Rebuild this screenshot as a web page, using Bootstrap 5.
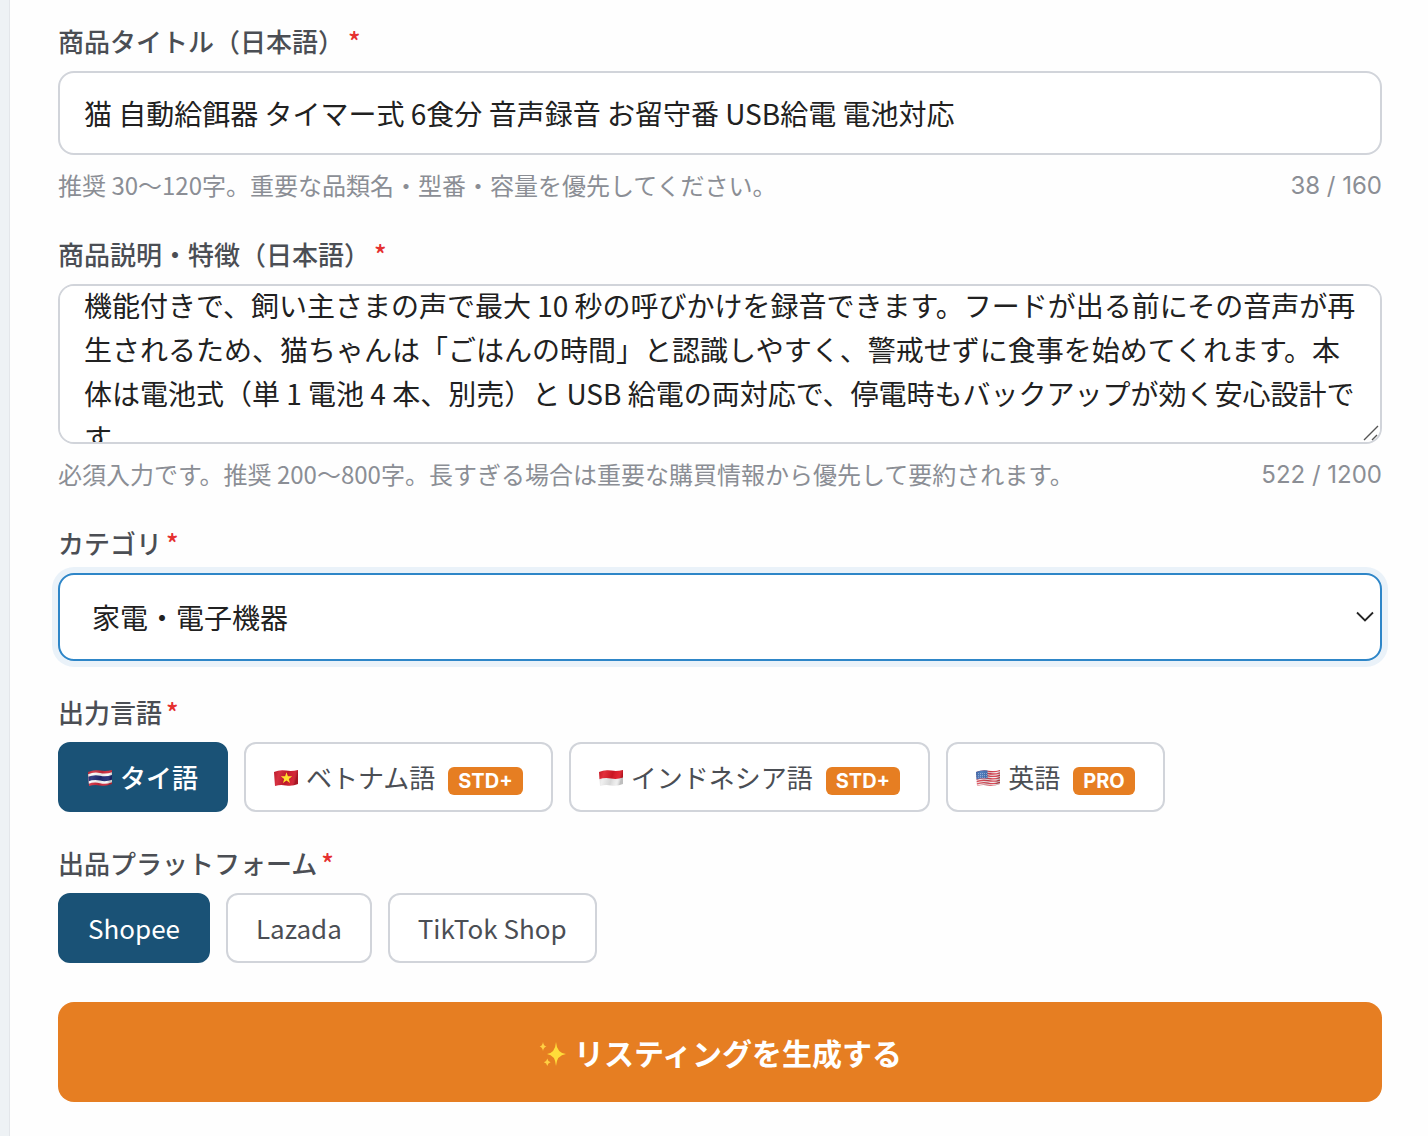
<!DOCTYPE html>
<html lang="ja">
<head>
<meta charset="utf-8">
<meta name="viewport" content="width=device-width, initial-scale=1">
<title>リスティング生成</title>
<link href="https://cdn.jsdelivr.net/npm/bootstrap@5.3.0/dist/css/bootstrap.min.css" rel="stylesheet">
<style>
  :root {
    --ink: #212121;
    --label: #4b4e54;
    --muted: #8b8e95;
    --line: #d1d4da;
    --navy: #1a5276;
    --orange: #e67e22;
    --blue: #2e86c8;
  }
  body {
    font-family: "Noto Sans CJK JP", sans-serif;
    color: var(--ink);
    background: #eef2f5;
  }
  .panel {
    min-height: 100vh;
    margin-left: 9px;
    padding: 22px 46px 34px 48px;
    background: #fefefe;
    border-left: 1px solid #e3e6ea;
  }
  .field { margin-bottom: 32px; }
  .field-label {
    display: block;
    margin-bottom: 12px;
    font-size: 26px;
    line-height: 37px;
    font-weight: 500;
    color: var(--label);
  }
  .req { margin-left: 4px; color: #e53030; }
  .form-control, .form-select {
    font-size: 28px;
    color: var(--ink);
    background-color: #fff;
    border: 2px solid var(--line);
    border-radius: 16px;
  }
  .form-control { padding: 20px 24px; line-height: 40px; }
  textarea.form-control {
    height: 160px;
    line-height: 44px;
    resize: vertical;
  }
  textarea.form-control::-webkit-scrollbar { width: 0; height: 0; }
  textarea.form-control::-webkit-resizer { background: transparent; }
  .area-wrap { position: relative; }
  .grip {
    position: absolute;
    right: 2px;
    bottom: 2px;
    pointer-events: none;
  }
  .form-select {
    height: 88px;
    padding: 20px 32px;
    line-height: 44px;
    background-image: url("data:image/svg+xml,%3Csvg xmlns='http://www.w3.org/2000/svg' viewBox='0 0 18 12'%3E%3Cpath d='M1 1.5l8 8 8-8' fill='none' stroke='%23262626' stroke-width='1.8'/%3E%3C/svg%3E");
    background-size: 18px 12px;
    background-position: right 6px center;
  }
  .form-select.is-active, .form-select:focus {
    border-color: var(--blue);
    box-shadow: 0 0 0 6px #eaf2f9;
  }
  .hint {
    margin-top: 12px;
    font-size: 24px;
    line-height: 36px;
    color: var(--muted);
  }
  .counter { font-family: Inter, sans-serif; line-height: 38px; height: 36px; }
  .chip {
    padding: 11px 28px;
    font-size: 26px;
    line-height: 44px;
    font-weight: 400;
    color: var(--label);
    background: #fff;
    border: 2px solid var(--line);
    border-radius: 12px;
  }
  .chip.active, .chip.active:hover {
    color: #fff;
    background: var(--navy);
    border-color: var(--navy);
  }
  .chip.lang { font-weight: 500; }
  .flag { width: 24px; height: 18px; margin-right: 8px; vertical-align: 1px; }
  .plan {
    display: inline-block;
    margin-left: 13px;
    padding: 0 10px;
    font-family: Inter, sans-serif;
    font-size: 20px;
    line-height: 28px;
    font-weight: 700;
    color: #fff;
    background: var(--orange);
    border-radius: 6px;
  }
  .actions { margin-top: 39px; }
  .submit {
    padding: 26px;
    font-size: 30px;
    line-height: 48px;
    font-weight: 700;
    color: #fff;
    background: var(--orange);
    border: 0;
    border-radius: 16px;
  }
  .submit:hover { color: #fff; background: #d3711a; }
  .sparkle { width: 28px; height: 28px; }
</style>
</head>
<body>
<svg width="0" height="0" class="position-absolute" aria-hidden="true">
  <defs>
    <clipPath id="wave"><path d="M0 3Q6 .4 12 1.6T24 1V15Q18 17.600 12 16.400T1 17Z"/></clipPath>
    <linearGradient id="fold" x1="0" x2="1" y1="0" y2=".2">
      <stop offset="0" stop-color="#000" stop-opacity=".12"/>
      <stop offset=".25" stop-color="#fff" stop-opacity=".1"/>
      <stop offset=".6" stop-color="#000" stop-opacity=".1"/>
      <stop offset=".85" stop-color="#fff" stop-opacity=".05"/>
      <stop offset="1" stop-color="#000" stop-opacity=".2"/>
    </linearGradient>
  </defs>
</svg>

<main class="panel">
  <form>
    <div class="field">
      <label class="field-label" for="title">商品タイトル（日本語）<span class="req">*</span></label>
      <input class="form-control" id="title" type="text" maxlength="160" value="猫 自動給餌器 タイマー式 6食分 音声録音 お留守番 USB給電 電池対応">
      <div class="hint d-flex justify-content-between">
        <span>推奨 30〜120字。重要な品類名・型番・容量を優先してください。</span>
        <span class="counter">38 / 160</span>
      </div>
    </div>

    <div class="field">
      <label class="field-label" for="desc">商品説明・特徴（日本語）<span class="req">*</span></label>
      <div class="area-wrap">
        <textarea class="form-control d-block" id="desc" maxlength="1200">機能付きで、飼い主さまの声で最大 10 秒の呼びかけを録音できます。フードが出る前にその音声が再生されるため、猫ちゃんは「ごはんの時間」と認識しやすく、警戒せずに食事を始めてくれます。本体は電池式（単 1 電池 4 本、別売）と USB 給電の両対応で、停電時もバックアップが効く安心設計です。</textarea>
        <svg class="grip" width="18" height="18" viewBox="0 0 18 18" fill="none" stroke="#555" stroke-width="1.400" aria-hidden="true"><path d="M2 16L16 2M10 16l5-5"/></svg>
      </div>
      <div class="hint d-flex justify-content-between">
        <span>必須入力です。推奨 200〜800字。長すぎる場合は重要な購買情報から優先して要約されます。</span>
        <span class="counter">522 / 1200</span>
      </div>
    </div>

    <div class="field">
      <label class="field-label" for="category">カテゴリ<span class="req">*</span></label>
      <select class="form-select is-active" id="category">
        <option selected>家電・電子機器</option>
      </select>
    </div>

    <div class="field" role="group" aria-labelledby="lang-label">
      <div class="field-label" id="lang-label">出力言語<span class="req">*</span></div>
      <div class="d-flex flex-wrap gap-3">
        <button type="button" class="btn chip lang active" aria-pressed="true"><svg class="flag" viewBox="0 0 24 18" aria-hidden="true"><g clip-path="url(#wave)"><path fill="#d02a3c" d="M0 0h24v18H0z"/><path fill="#fafafa" d="M0 5.200Q6 2.500 12 3.900T24 3.200V13.200Q18 15.700 12 14.200T0 15Z"/><path fill="#1f2a75" d="M0 7.800Q6 5.400 12 6.700T24 6V10.800Q18 13 12 11.600T0 12.500Z"/><path fill="url(#fold)" d="M0 0h24v18H0z"/></g></svg>タイ語</button>
        <button type="button" class="btn chip" aria-pressed="false"><svg class="flag" viewBox="0 0 24 18" aria-hidden="true"><g clip-path="url(#wave)"><path fill="#d11a2c" d="M0 0h24v18H0z"/><path fill="url(#fold)" d="M0 0h24v18H0z"/><path fill="#ffdf2e" d="M12.500 3.200l1.400 4 4.300.1-3.400 2.600 1.200 4.100-3.500-2.400-3.500 2.400 1.200-4.100-3.400-2.600 4.300-.1z"/></g></svg>ベトナム語<span class="plan">STD+</span></button>
        <button type="button" class="btn chip" aria-pressed="false"><svg class="flag" viewBox="0 0 24 18" aria-hidden="true"><g clip-path="url(#wave)"><path fill="#eeeeee" d="M0 0h24v18H0z"/><path fill="#df1826" d="M0 0h24v8.500Q18 10.800 12 9.500T0 10.200Z"/><path fill="url(#fold)" d="M0 0h24v18H0z"/></g></svg>インドネシア語<span class="plan">STD+</span></button>
        <button type="button" class="btn chip" aria-pressed="false"><svg class="flag" viewBox="0 0 24 18" aria-hidden="true"><g clip-path="url(#wave)"><path fill="#f3eeee" d="M0 0h24v18H0z"/><g fill="none" stroke="#d8414f" stroke-width="1.300"><path d="M0 3.200Q6 .8 12 2.100T24 1.400M0 5.600Q6 3.200 12 4.500T24 3.800M0 8Q6 5.600 12 6.900T24 6.200M0 10.400Q6 8 12 9.300T24 8.600M0 12.800Q6 10.400 12 11.700T24 11M0 15.200Q6 12.800 12 14.100T24 13.400M0 17.600Q6 15.200 12 16.500T24 15.800"/></g><path fill="#3f6fb5" d="M0 0h11.500v9.400Q6 8.600 0 10.600Z"/><path d="M2 4.500h9M2 6.500h9M2 8.300h9" stroke="#c5d5ec" stroke-width=".7" stroke-dasharray=".8 1.200"/><path fill="url(#fold)" d="M0 0h24v18H0z"/></g></svg>英語<span class="plan">PRO</span></button>
      </div>
    </div>

    <div class="field mb-0" role="group" aria-labelledby="platform-label">
      <div class="field-label" id="platform-label">出品プラットフォーム<span class="req">*</span></div>
      <div class="d-flex flex-wrap gap-3">
        <button type="button" class="btn chip active" aria-pressed="true">Shopee</button>
        <button type="button" class="btn chip" aria-pressed="false">Lazada</button>
        <button type="button" class="btn chip" aria-pressed="false">TikTok Shop</button>
      </div>
    </div>

    <div class="actions">
      <button type="submit" class="btn submit w-100 d-flex justify-content-center align-items-center gap-2">
        <svg class="sparkle" viewBox="0 0 28 28" fill="#ffdc3a" aria-hidden="true"><path d="M18 4Q18.800 15 28 16Q18.800 17 18 28Q17.200 17 9 16Q17.200 15 18 4Z"/><circle cx="18" cy="16" r="2.500"/><path fill="#ffd044" d="M5 4Q5.600 8 8.500 8.600Q5.600 9.200 5 13Q4.400 9.200 1.600 8.600Q4.400 8 5 4ZM9.300 20.500Q9.900 23.600 12.600 24.200Q9.900 24.800 9.300 28Q8.700 24.800 5.900 24.200Q8.700 23.600 9.300 20.500Z"/></svg>
        <span>リスティングを生成する</span>
      </button>
    </div>
  </form>
</main>

<script src="https://cdn.jsdelivr.net/npm/bootstrap@5.3.0/dist/js/bootstrap.bundle.min.js"></script>
<script>
  // Keep the description scrolled past its top padding.
  document.getElementById('desc').scrollTop = 23;
</script>
</body>
</html>
